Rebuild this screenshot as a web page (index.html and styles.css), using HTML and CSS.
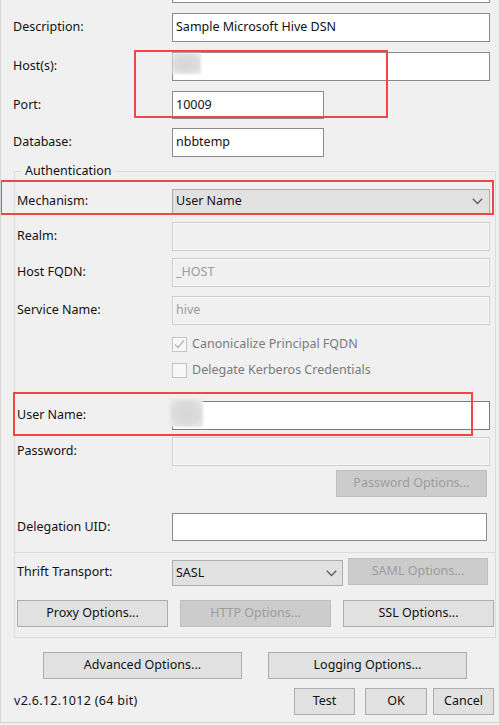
FILE: index.html
```html
<!DOCTYPE html>
<html>
<head>
<meta charset="utf-8">
<link rel="stylesheet" href="styles.css">
</head>
<body>
<div class="win">
  <div class="stub"></div>
  <div class="row g10"><span class="lbl">Description:</span><div class="tb">Sample Microsoft Hive DSN</div></div>
  <div class="row g10"><span class="lbl">Host(s):</span><div class="tb"><span class="blur b-host"></span></div></div>
  <div class="row g10 h28"><span class="lbl">Port:</span><div class="tb short">10009</div></div>
  <div class="row g9"><span class="lbl">Database:</span><div class="tb short">nbbtemp</div></div>

  <div class="group">
    <span class="legend">Authentication</span>
    <div class="row in p17 h25"><span class="lbl">Mechanism:</span>
      <div class="combo wide"><span>User Name</span>
        <svg class="chev" width="11" height="7" viewBox="0 0 11 7"><polyline points="0.8,0.8 5.5,5.5 10.2,0.8" fill="none" stroke="#5a5a5a" stroke-width="1.3"/></svg>
      </div>
    </div>
    <div class="row in g8"><span class="lbl">Realm:</span><div class="tb dis"></div></div>
    <div class="row in g7"><span class="lbl">Host FQDN:</span><div class="tb dis">_HOST</div></div>
    <div class="row in g9"><span class="lbl">Service Name:</span><div class="tb dis">hive</div></div>
    <div class="chk g12"><span class="box"><svg width="13" height="13" viewBox="0 0 13 13"><polyline points="2,6.5 5,9.5 11,2.5" fill="none" stroke="#b4b4b4" stroke-width="1.3"/></svg></span><span class="chk-lbl">Canonicalize Principal FQDN</span></div>
    <div class="chk g11"><span class="box"></span><span class="chk-lbl">Delegate Kerberos Credentials</span></div>
    <div class="row in g23"><span class="lbl">User Name:</span><div class="tb dark"><span class="blur b-user"></span></div></div>
    <div class="row in g7"><span class="lbl">Password:</span><div class="tb dis"></div></div>
    <div class="btnrow g4"><button class="btn dis pwd">Password Options...</button></div>
    <div class="row in g16 h28"><span class="lbl">Delegation UID:</span><div class="tb deleg"></div></div>
    <div class="sep"></div>
    <div class="row in thrift"><span class="lbl">Thrift Transport:</span>
      <div class="combo small"><span>SASL</span>
        <svg class="chev" width="11" height="7" viewBox="0 0 11 7"><polyline points="0.8,0.8 5.5,5.5 10.2,0.8" fill="none" stroke="#5a5a5a" stroke-width="1.3"/></svg>
      </div>
      <button class="btn dis saml">SAML Options...</button>
    </div>
    <div class="opts">
      <button class="btn opt">Proxy Options...</button>
      <button class="btn dis opt">HTTP Options...</button>
      <button class="btn opt">SSL Options...</button>
    </div>
  </div>

  <div class="adv">
    <button class="btn big">Advanced Options...</button>
    <button class="btn big">Logging Options...</button>
  </div>
  <div class="foot">
    <span class="ver">v2.6.12.1012 (64 bit)</span>
    <button class="btn test">Test</button>
    <button class="btn ok">OK</button>
    <button class="btn cancel">Cancel</button>
  </div>

  <div class="mark m-host"></div>
  <div class="mark m-mech"></div>
  <div class="mark m-user"></div>
</div>
</body>
</html>
```
FILE: styles.css
```css
* { box-sizing: border-box; }
html, body { margin: 0; padding: 0; background: #f0f0f0; }
body {
  font-family: "Noto Sans", "Open Sans", sans-serif;
  font-size: 12.5px;
  line-height: 16px;
  color: #111;
}
.win {
  position: relative;
  width: 499px;
  height: 723px;
  border-left: 1px solid #d6d6d6;
  border-bottom: 1px solid #cfcfcf;
  padding: 0 5px 0 12px;
  overflow: hidden;
}
.stub {
  margin-left: 159px;
  width: 318px;
  height: 3px;
  border: 1px solid #8a8a8a;
  border-top: none;
  background: #fff;
}
.row { display: flex; align-items: center; height: 29px; }
.h28 { height: 28px; }
.h25 { height: 25px; }
.lbl { width: 159px; flex: none; padding-bottom: 1px; }
.row.in .lbl { width: 155px; }
.g4 { margin-top: 4px; }
.g7 { margin-top: 7px; }
.g8 { margin-top: 8px; }
.g9 { margin-top: 9px; }
.g10 { margin-top: 10px; }
.g11 { margin-top: 11px; }
.g12 { margin-top: 12px; }
.g16 { margin-top: 16px; }
.g23 { margin-top: 23px; }
.p17 { margin-top: 17px; }

.tb {
  position: relative;
  width: 318px;
  height: 100%;
  background: #fff;
  border: 1px solid #8a8a8a;
  padding: 0 0 1px 3px;
  display: flex;
  align-items: center;
  color: #111;
}
.tb.short { width: 152px; }
.tb.deleg { width: 315px; }
.tb.dark { border-color: #7a7a7a; }
.tb.dis {
  background: #f0f0f0;
  border-color: #cfcfcf;
  box-shadow: inset 0 0 0 1px #f7f7f7;
  color: #9a9a9a;
}
.blur {
  position: absolute;
  background: radial-gradient(ellipse at center, #d6d6d6 0%, #dcdcdc 55%, #ececec 100%);
  filter: blur(1px);
}
.b-host { left: -1px; top: 0; width: 29px; height: 21px; }
.b-user { left: -3px; top: -3px; width: 33px; height: 28px; }

.group {
  position: relative;
  margin-top: 14px;
  margin-left: 1px;
  width: 482px;
  border: 1px solid #dcdcdc;
  padding: 0 0 10px 2px;
}
.legend {
  position: absolute;
  left: 7px;
  top: -9px;
  padding: 0 3px;
  background: #f0f0f0;
}
.combo {
  height: 100%;
  background: #e1e1e1;
  border: 1px solid #adadad;
  display: flex;
  align-items: center;
  justify-content: space-between;
  padding: 0 6px 0 3px;
}
.combo span { padding-bottom: 1px; }
.combo.wide { width: 318px; }
.combo.small { width: 171px; padding-right: 5px; }
.chev { display: block; }

.chk { display: flex; align-items: center; height: 15px; padding-left: 155px; }
.box {
  width: 15px; height: 15px;
  border: 1px solid #c4c4c4;
  background: #f7f7f7;
  display: flex; align-items: center; justify-content: center;
  flex: none;
}
.chk-lbl { margin-left: 5px; color: #7a7a7a; padding-bottom: 1px; }

.btn {
  font: inherit;
  color: #111;
  height: 27px;
  background: #e1e1e1;
  border: 1px solid #adadad;
  padding: 0 0 1px 0;
  margin: 0;
  text-align: center;
}
.btn.dis { background: #cccccc; border-color: #bfbfbf; color: #9c9c9c; }
.btnrow { display: flex; }
.pwd { width: 151px; margin-left: 319px; }
.sep { margin-top: 11px; margin-left: -2px; width: 480px; height: 1px; background: #dcdcdc; }
.row.thrift { margin-top: 5px; height: 28px; align-items: flex-start; }
.row.thrift .lbl { margin-top: 6px; }
.row.thrift .combo { height: 26px; margin-top: 2px; }
.saml { width: 140px; margin-left: 5px; }
.opts { display: flex; gap: 12px; margin-top: 14px; }
.opt { width: 151px; }

.adv { display: flex; margin-top: 14px; padding-left: 30px; gap: 26px; }
.big { width: 199px; }
.foot { display: flex; align-items: center; margin-top: 9px; height: 27px; }
.ver { margin-left: 1px; flex: 1; padding-bottom: 1px; letter-spacing: 0.3px; }
.test { width: 61px; }
.ok { width: 62px; margin-left: 10px; }
.cancel { width: 61px; margin-left: 6px; }

.mark { position: absolute; border: 2px solid #ef4646; }
.m-host { left: 133px; top: 50px; width: 254px; height: 68px; }
.m-mech { left: -1px; top: 180px; width: 494px; height: 35px; }
.m-user { left: 12px; top: 392px; width: 460px; height: 44px; }
```
